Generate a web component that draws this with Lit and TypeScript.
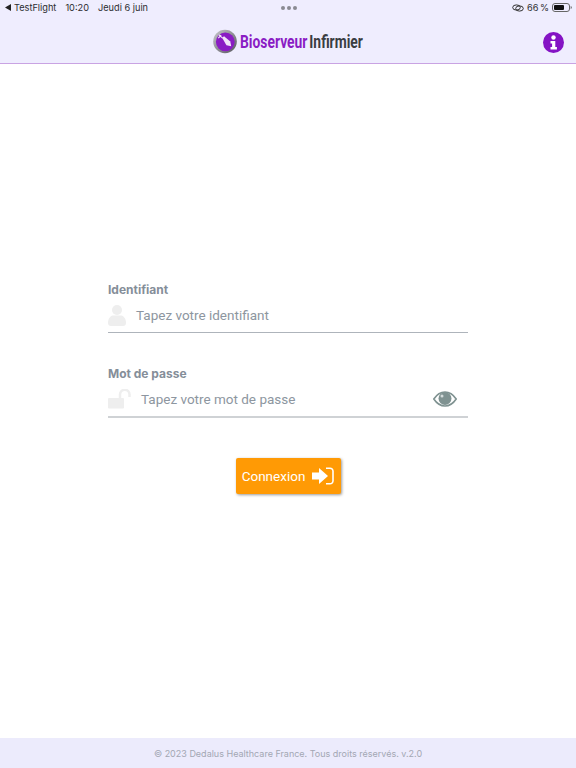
import { LitElement, css, html } from "lit";
import { customElement } from "lit/decorators.js";

@customElement("app-root")
export class AppRoot extends LitElement {
    static styles = css`
        :host {
            display: flex;
            flex-direction: column;
            height: 768px;
            background-color: #fff;
            font-family: Inter, "Liberation Sans", sans-serif;
            overflow: hidden;
        }
        header {
            height: 64px;
            box-sizing: border-box;
            background-color: #efedfe;
            border-bottom: 1px solid #c9a3e3;
            display: flex;
            flex-direction: column;
        }
        .status {
            height: 15px;
            display: grid;
            grid-template-columns: 1fr auto 1fr;
            align-items: center;
            padding: 0 4px 0 5px;
            font-size: 9.2px;
            color: #2c2c30;
        }
        .status-left {
            display: flex;
            align-items: center;
            gap: 9px;
        }
        .back {
            display: flex;
            align-items: center;
            gap: 3px;
        }
        .status-right {
            display: flex;
            align-items: center;
            justify-content: flex-end;
            gap: 3px;
            word-spacing: -1px;
        }
        .dots {
            display: flex;
            gap: 2px;
        }
        .dots span {
            width: 4px;
            height: 4px;
            border-radius: 50%;
            background-color: #8a8a92;
        }
        .nav {
            flex: 1;
            display: grid;
            grid-template-columns: 1fr auto 1fr;
            align-items: center;
            padding: 5px 12px 0;
        }
        .logo {
            grid-column: 2;
            display: flex;
            align-items: center;
            gap: 3px;
        }
        .logo-text {
            width: 123px;
            font-family: Roboto, sans-serif;
            font-size: 18px;
            font-weight: 700;
            word-spacing: -2px;
            white-space: nowrap;
            color: #3a3d42;
        }
        .logo-text span {
            display: inline-block;
            transform: scaleX(0.77);
            transform-origin: left center;
        }
        .logo-text b {
            color: #8a1cc4;
            font-weight: 700;
        }
        .info {
            justify-self: end;
            display: block;
            margin-top: 1px;
        }
        main {
            flex: 1;
            display: flex;
            flex-direction: column;
            align-items: center;
            padding-top: 218px;
        }
        form {
            width: 360px;
            display: flex;
            flex-direction: column;
        }
        label {
            font-size: 12px;
            font-weight: 700;
            color: #858e99;
            line-height: 16px;
        }
        .field {
            height: 35px;
            margin-bottom: 33px;
            box-sizing: border-box;
            border-bottom: 1px solid #aeb4bb;
            display: flex;
            align-items: center;
            font-family: Roboto, sans-serif;
            font-size: 13.5px;
            color: #8d96a0;
        }
        .field.pass {
            height: 36px;
            margin-bottom: 32px;
            border-bottom: 2px solid #cfd2d5;
        }
        .field .text {
            flex: 1;
        }
        .user-icon,
        .lock-icon {
            margin-right: 10px;
        }
        .eye {
            margin-right: 11px;
        }
        button {
            align-self: center;
            margin-top: 8px;
            width: 105px;
            height: 36px;
            border: none;
            border-radius: 2px;
            background-color: #ff9a05;
            color: #fff;
            box-shadow: 1px 1px 3px rgba(0, 0, 0, 0.4);
            font-family: Roboto, sans-serif;
            font-size: 13.5px;
            display: flex;
            align-items: center;
            justify-content: center;
            gap: 7px;
            padding: 0;
        }
        footer {
            height: 30px;
            background-color: #ecebfc;
            color: #a3a7b3;
            font-size: 9px;
            display: flex;
            align-items: center;
            justify-content: center;
        }
    `;

    render() {
        return html`
            <header>
                <div class="status">
                    <div class="status-left">
                        <span class="back">
                            <svg width="6" height="7" viewBox="0 0 6 7"><path d="M6 0v7L0 3.500z" fill="#222"/></svg>
                            TestFlight
                        </span>
                        <span>10:20</span>
                        <span>Jeudi 6 juin</span>
                    </div>
                    <div class="dots"><span></span><span></span><span></span></div>
                    <div class="status-right">
                        <svg width="12" height="8" viewBox="0 0 12 8" fill="none" stroke="#333" stroke-width="1">
                            <ellipse cx="4.500" cy="3.500" rx="3.800" ry="2.600"/>
                            <ellipse cx="7.500" cy="4.500" rx="3.800" ry="2.600"/>
                        </svg>
                        <span>66 %</span>
                        <svg width="20" height="9" viewBox="0 0 20 9">
                            <rect x=".5" y=".5" width="17" height="8" rx="2.500" fill="none" stroke="#666"/>
                            <rect x="2" y="2" width="10" height="5" rx="1" fill="#111"/>
                            <path d="M18.700 3v3a1.600 1.600 0 0 0 0-3z" fill="#666"/>
                        </svg>
                    </div>
                </div>
                <div class="nav">
                    <div class="logo">
                        <svg width="24" height="25" viewBox="0 0 25 25">
                            <defs>
                                <linearGradient id="ring" x1="0" y1="0" x2="1" y2="1">
                                    <stop offset="0" stop-color="#c9c9ce"/>
                                    <stop offset="1" stop-color="#55555c"/>
                                </linearGradient>
                            </defs>
                            <circle cx="12.500" cy="12.500" r="12.300" fill="url(#ring)"/>
                            <circle cx="12.800" cy="12.800" r="9.800" fill="#8a1cc4"/>
                            <path d="M9.500 8.500l2-1.500 6.500 5.500 1 5-5-1z" fill="#f0e4f8"/>
                            <path d="M6 5.500l4 3.500M5.500 9l3-3" stroke="#f0e4f8" stroke-width="1.200"/>
                        </svg>
                        <div class="logo-text"><span><b>Bioserveur</b> Infirmier</span></div>
                    </div>
                    <svg class="info" width="21" height="21" viewBox="0 0 21 21">
                        <circle cx="10.500" cy="10.500" r="10.500" fill="#8413c4"/>
                        <circle cx="10.500" cy="5.500" r="2.200" fill="#fff"/>
                        <path d="M7.500 9h4.800v6h1.600v2.400H7.500V15h1.600v-3.600H7.500z" fill="#fff"/>
                    </svg>
                </div>
            </header>
            <main>
                <form>
                    <label>Identifiant</label>
                    <div class="field">
                        <svg class="user-icon" width="18" height="21" viewBox="0 0 18 21" fill="#eeeeee">
                            <circle cx="9" cy="5" r="5"/>
                            <path d="M0 18c0-5 3-7.500 5-7.500h8c2 0 5 2.500 5 7.500 0 2-1 3-3 3H3c-2 0-3-1-3-3z"/>
                        </svg>
                        <span class="text">Tapez votre identifiant</span>
                    </div>
                    <label>Mot de passe</label>
                    <div class="field pass">
                        <svg class="lock-icon" width="23" height="20" viewBox="0 0 23 20" fill="none">
                            <rect x="0" y="9" width="16" height="10.500" rx="1" fill="#eeeeee"/>
                            <path d="M12 9V5.500a4.500 4.500 0 0 1 9.500 0V8" stroke="#eeeeee" stroke-width="2.500"/>
                        </svg>
                        <span class="text">Tapez votre mot de passe</span>
                        <svg class="eye" width="24" height="16" viewBox="0 0 24 16">
                            <path d="M.8 8C4 3.200 7.800 1 12 1s8 2.200 11.200 7c-3.200 4.800-7 7-11.200 7S4 12.800.8 8z" fill="none" stroke="#7f9291" stroke-width="1.600"/>
                            <circle cx="12" cy="7.500" r="6.500" fill="#7f9291"/>
                            <circle cx="9" cy="5" r="1.500" fill="#d5dcdc"/>
                        </svg>
                    </div>
                    <button type="button">
                        Connexion
                        <svg width="22" height="18" viewBox="0 0 22 18" fill="#fff">
                            <path d="M0 5.500h7V1l9 8-9 8v-4.500H0z"/>
                            <path d="M14 .5h4c2.200 0 3.800 1.600 3.800 3.800v9.400c0 2.200-1.600 3.800-3.800 3.800h-4V16h4c1.300 0 2.200-.9 2.200-2.300V4.300C20.200 2.900 19.300 2 18 2h-4z"/>
                        </svg>
                    </button>
                </form>
            </main>
            <footer>© 2023 Dedalus Healthcare France. Tous droits réservés. v.2.0</footer>
        `;
    }
}
